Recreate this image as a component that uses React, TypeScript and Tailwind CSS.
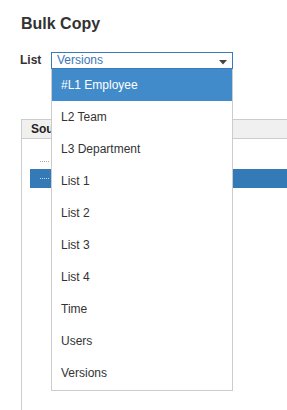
import React from "react";

const items = [
  "#L1 Employee",
  "L2 Team",
  "L3 Department",
  "List 1",
  "List 2",
  "List 3",
  "List 4",
  "Time",
  "Users",
  "Versions",
];

export default function App() {
  return (
    <div
      className="relative w-[287px] h-[410px] overflow-hidden bg-white text-[#333]"
      style={{ fontFamily: '"Liberation Sans", Arial, sans-serif' }}
    >
      <div className="pt-[14px] pl-[21px] text-[16px] leading-[20px] font-bold text-[#333]">
        Bulk Copy
      </div>
      <div className="mt-[18px] flex items-start pl-[20px]">
        <div className="w-[31px] text-[12px] leading-[17px] font-bold">List</div>
        <div className="relative w-[182px] h-[17px] border border-[#3a7bbd] bg-white">
          <div className="pl-[5px] text-[12px] leading-[15px] text-[#3a77b5]">Versions</div>
          <svg
            className="absolute right-[5px] top-[7px]"
            width="8"
            height="5"
            viewBox="0 0 8 5"
          >
            <path d="M0 0 H8 L4 4.5 Z" fill="#444" />
          </svg>
        </div>
      </div>

      <div className="mt-[50px] ml-[21px] h-[300px] border-l border-t border-[#ccc]">
        <div className="h-[19px] bg-[#f0f0f0] border-b border-[#ccc] pl-[9px] text-[12px] leading-[19px] font-bold text-[#222]">
          Source
        </div>
        <div className="pt-[12px]">
          <div className="h-[18px] flex items-center pl-[18px]">
            <div className="w-[9px] mt-[2px] border-t border-dotted border-[#aaa]" />
          </div>
          <div className="ml-[8px] h-[19px] bg-[#337ab7] flex items-center pl-[10px]">
            <div className="w-[9px] border-t border-dotted border-[#c8d8ea]" />
          </div>
        </div>
      </div>

      <div className="absolute left-[51px] top-[69px] w-[182px] pb-[1px] border border-t-0 border-[#ccc] bg-white">
        {items.map((it, i) => (
          <div
            key={it}
            className={
              i === 0
                ? "h-[32px] pt-[1px] pl-[9px] text-[12px] leading-[31px] bg-[#428bca] text-white"
                : "h-[32px] pt-[1px] pl-[9px] text-[12px] leading-[31px] text-[#333]"
            }
          >
            {it}
          </div>
        ))}
      </div>
    </div>
  );
}
